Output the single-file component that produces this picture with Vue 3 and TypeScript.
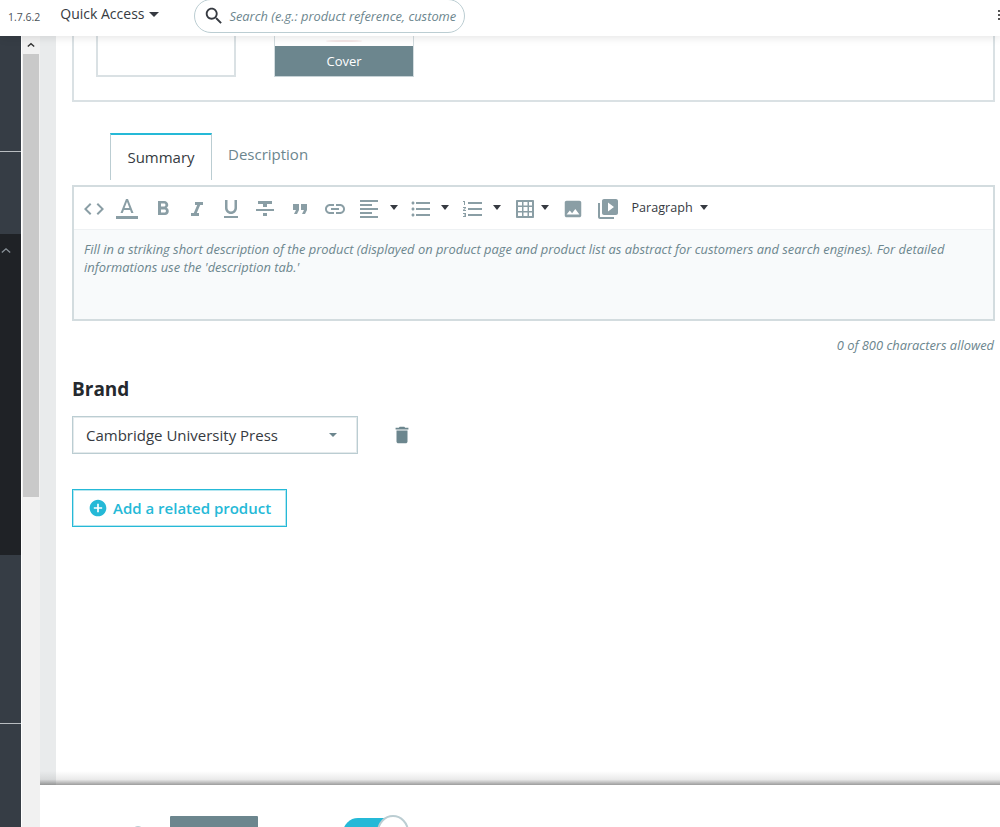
<script setup lang="ts">
interface ToolItem {
  kind: 'icon' | 'caret'
  gap: number
  d?: string
  size?: number
}

const tools: ToolItem[] = [
  { kind: 'icon', gap: 0, size: 24, d: 'M9.4 16.6 4.8 12l4.6-4.6L8 6l-6 6 6 6 1.4-1.4zm5.2 0 4.6-4.6-4.6-4.6L16 6l6 6-6 6-1.4-1.4z' },
  { kind: 'icon', gap: 9, size: 24, d: 'M11 2 5.500 16h2.250l1.120-3h6.250l1.120 3h2.250L13 2h-2zm-1.380 9L12 4.670 14.380 11H9.620zM1 19h22v3H1z' },
  { kind: 'icon', gap: 12, size: 24, d: 'M15.600 10.790c.97-.67 1.650-1.770 1.650-2.790 0-2.260-1.750-4-4-4H7v14h7.040c2.090 0 3.710-1.700 3.710-3.790 0-1.520-.86-2.820-2.150-3.420zM10 6.500h3c.83 0 1.500.67 1.500 1.500s-.67 1.500-1.500 1.500h-3v-3zm3.500 9H10v-3h3.500c.83 0 1.500.67 1.500 1.500s-.67 1.500-1.500 1.500z' },
  { kind: 'icon', gap: 10, size: 24, d: 'M10 5v3h2.210l-3.420 8H6v3h8v-3h-2.210l3.420-8H18V5z' },
  { kind: 'icon', gap: 10, size: 24, d: 'M12 17c3.310 0 6-2.690 6-6V3h-2.500v8c0 1.930-1.570 3.500-3.500 3.500S8.500 12.930 8.500 11V3H6v8c0 3.310 2.690 6 6 6zm-7 2v2h14v-2H5z' },
  { kind: 'icon', gap: 10, size: 24, d: 'M10 19h4v-3h-4v3zM5 4v3h5v3h4V7h5V4H5zM3 14h18v-2H3v2z' },
  { kind: 'icon', gap: 11, size: 24, d: 'M6 17h3l2-4V7H5v6h3zm8 0h3l2-4V7h-6v6h3z' },
  { kind: 'icon', gap: 11, size: 24, d: 'M3.900 12c0-1.710 1.390-3.100 3.100-3.100h4V7H7c-2.760 0-5 2.240-5 5s2.240 5 5 5h4v-1.900H7c-1.710 0-3.100-1.390-3.100-3.100zM8 13h8v-2H8v2zm9-6h-4v1.900h4c1.710 0 3.100 1.390 3.100 3.100s-1.390 3.100-3.100 3.100h-4V17h4c2.760 0 5-2.240 5-5s-2.240-5-5-5z' },
  { kind: 'icon', gap: 10, size: 24, d: 'M15 15H3v2h12v-2zm0-8H3v2h12V7zM3 13h18v-2H3v2zm0 8h18v-2H3v2zM3 3v2h18V3H3z' },
  { kind: 'caret', gap: 9 },
  { kind: 'icon', gap: 11, size: 24, d: 'M4 10.500c-.83 0-1.500.67-1.500 1.500s.67 1.500 1.500 1.500 1.500-.67 1.500-1.500-.67-1.500-1.500-1.500zm0-6c-.83 0-1.500.67-1.500 1.500S3.170 7.500 4 7.500 5.500 6.830 5.500 6 4.830 4.500 4 4.500zm0 12c-.83 0-1.500.68-1.500 1.500s.68 1.500 1.500 1.500 1.500-.68 1.500-1.500-.67-1.500-1.500-1.500zM7 19h14v-2H7v2zm0-6h14v-2H7v2zm0-8v2h14V5H7z' },
  { kind: 'caret', gap: 8 },
  { kind: 'icon', gap: 12, size: 24, d: 'M2 17h2v.5H3v1h1v.5H2v1h3v-4H2v1zm1-9h1V4H2v1h1v3zm-1 3h1.800L2 13.100v.9h3v-1H3.200L5 10.900V10H2v1zm5-6v2h14V5H7zm0 14h14v-2H7v2zm0-6h14v-2H7v2z' },
  { kind: 'caret', gap: 8 },
  { kind: 'icon', gap: 11.5, size: 24, d: 'M20 3H4c-.55 0-1 .45-1 1v16c0 .55.45 1 1 1h16c.55 0 1-.45 1-1V4c0-.55-.45-1-1-1zM9 19H5v-3.500h4V19zm0-5H5v-4h4v4zm0-5.500H5V5h4v3.500zm5.500 10.500h-4v-3.500h4V19zm0-5h-4v-4h4v4zm0-5.500h-4V5h4v3.500zM19 19h-3v-3.500h3V19zm0-5h-3v-4h3v4zm0-5.500h-3V5h3v3.500z' },
  { kind: 'caret', gap: 4 },
  { kind: 'icon', gap: 13, size: 22, d: 'M21 19V5c0-1.100-.9-2-2-2H5c-1.100 0-2 .9-2 2v14c0 1.100.9 2 2 2h14c1.100 0 2-.9 2-2zM8.500 13.500l2.500 3.010L14.500 12l4.500 6H5l3.500-4.500z' },
  { kind: 'icon', gap: 12, size: 24, d: 'M4 6H2v14c0 1.100.9 2 2 2h14v-2H4V6zm16-4H8c-1.100 0-2 .9-2 2v12c0 1.100.9 2 2 2h12c1.100 0 2-.9 2-2V4c0-1.100-.9-2-2-2zm-8 12.500v-9l6 4.500-6 4.500z' }
]
</script>

<template>
  <div class="page">
    <header class="topbar">
      <span class="version">1.7.6.2</span>
      <span class="quick">Quick Access<i class="caret caret-dark"></i></span>
      <div class="search">
        <svg class="search-icon" viewBox="0 0 24 24" width="22" height="22"><path d="M15.500 14h-.79l-.28-.27C15.410 12.590 16 11.110 16 9.500 16 5.910 13.090 3 9.500 3S3 5.910 3 9.500 5.910 16 9.500 16c1.610 0 3.090-.59 4.230-1.570l.27.28v.79l5 4.990L20.490 19l-4.990-5zm-6 0C7.010 14 5 11.990 5 9.500S7.010 5 9.500 5 14 7.010 14 9.500 11.990 14 9.500 14z" /></svg>
        <span class="search-text">Search (e.g.: product reference, custome</span>
      </div>
      <span class="kebab"></span>
    </header>

    <div class="frame">
      <aside class="sidebar">
        <div class="side side-a"></div>
        <div class="side side-b"></div>
        <div class="side side-active">
          <svg viewBox="0 0 12 8" width="10" height="7"><path d="M1 6.500 6 2l5 4.500" fill="none" stroke="#8a9299" stroke-width="1.600" /></svg>
        </div>
        <div class="side side-c"></div>
        <div class="side side-d"></div>
      </aside>

      <div class="scrollbar">
        <div class="scroll-btn">
          <svg viewBox="0 0 10 7" width="8" height="6"><path d="M1 5.500 5 1.800l4 3.700" fill="none" stroke="#333" stroke-width="1.700" /></svg>
        </div>
        <div class="scroll-thumb"></div>
      </div>

      <div class="workspace">
        <div class="viewport">
          <main class="content">
            <section class="images-card">
              <div class="tile"></div>
              <div class="tile tile-cover">
                <div class="tile-image"><span class="tile-smear"></span></div>
                <div class="cover-label">Cover</div>
              </div>
            </section>

            <nav class="tabs">
              <div class="tab tab-active">Summary</div>
              <div class="tab">Description</div>
            </nav>

            <section class="editor">
              <div class="toolbar">
                <template v-for="(t, i) in tools" :key="i">
                  <span v-if="t.kind === 'caret'" class="caret caret-tool" :style="{ marginLeft: t.gap + 'px' }"></span>
                  <svg v-else class="tool" viewBox="0 0 24 24" :width="t.size" :height="t.size" :style="{ marginLeft: t.gap + 'px' }"><path :d="t.d" /></svg>
                </template>
                <span class="paragraph">Paragraph</span>
                <span class="caret caret-para"></span>
              </div>
              <div class="editor-body">Fill in a striking short description of the product (displayed on product page and product list as abstract for customers and search engines). For detailed informations use the 'description tab.'</div>
            </section>

            <p class="counter">0 of 800 characters allowed</p>

            <h2 class="brand-title">Brand</h2>
            <div class="brand-row">
              <div class="select">
                <span>Cambridge University Press</span>
                <i class="select-caret"></i>
              </div>
              <svg class="trash" viewBox="0 0 24 24" width="22" height="22"><path d="M6 19c0 1.100.9 2 2 2h8c1.100 0 2-.9 2-2V7H6v12zM19 4h-3.500l-1-1h-5l-1 1H5v2h14V4z" /></svg>
            </div>

            <button class="add-btn" type="button">
              <svg viewBox="0 0 24 24" width="20" height="20"><path d="M12 2C6.480 2 2 6.480 2 12s4.480 10 10 10 10-4.480 10-10S17.520 2 12 2zm5 11h-4v4h-2v-4H7v-2h4V7h2v4h4v2z" /></svg>
              <span>Add a related product</span>
            </button>
          </main>
        </div>

        <footer class="footer">
          <span class="foot-arc"></span>
          <span class="foot-btn"></span>
          <span class="foot-switch"><i class="foot-knob"></i></span>
        </footer>
      </div>
    </div>
  </div>
</template>

<style>
html, body { margin: 0; background: #fff; }
</style>

<style scoped>
.page {
  width: 1000px;
  height: 827px;
  overflow: hidden;
  display: flex;
  flex-direction: column;
  font-family: "Open Sans", "Noto Sans", sans-serif;
  color: #363a41;
  background: #fff;
}
.topbar {
  position: relative;
  z-index: 3;
  flex: 0 0 36px;
  height: 36px;
  display: flex;
  align-items: flex-start;
  background: #fff;
  box-shadow: 0 0 10px rgba(0, 0, 0, 0.14);
}
.version { margin: 10px 0 0 8px; font-size: 10.500px; line-height: 14px; color: #4a5157; }
.quick { margin: 4px 0 0 20px; font-size: 14px; line-height: 20px; color: #363a41; display: flex; align-items: center; }
.caret { display: inline-block; width: 0; height: 0; border-left: 5px solid transparent; border-right: 5px solid transparent; border-top: 5px solid #363a41; }
.caret-dark { margin-left: 5px; }
.search {
  margin: -1px 0 0 35px;
  width: 269px;
  height: 32px;
  border: 1px solid #bbcdd2;
  border-radius: 17px;
  display: flex;
  align-items: center;
  flex: none;
}
.search-icon { margin-left: 8px; flex: none; fill: #363a41; }
.search-text {
  margin-left: 4px;
  white-space: nowrap;
  font-style: italic;
  font-size: 12.850px;
  color: #6c868e;
}
.kebab { margin: 10px 0 0 auto; width: 2px; height: 10px; background: repeating-linear-gradient(#555 0 2px, transparent 2px 4px); }
.frame { flex: 1; display: flex; min-height: 0; }
.sidebar {
  flex: 0 0 21px;
  display: flex;
  flex-direction: column;
  background: #363d45;
}
.side { box-sizing: border-box; flex: none; }
.side-a { height: 116px; border-bottom: 1px solid #b9bdc1; }
.side-b { height: 82px; }
.side-active { height: 321px; background: #1f2226; display: flex; justify-content: center; padding-top: 13px; }
.side-active svg { margin-left: -9px; }
.side-c { height: 169px; border-bottom: 1px solid #b9bdc1; }
.side-d { flex: 1; }
.scrollbar {
  flex: 0 0 19px;
  box-sizing: border-box;
  border-left: 1px solid #fff;
  background: #f1f1f1;
  display: flex;
  flex-direction: column;
  padding-right: 1px;
}
.scroll-btn { height: 18px; display: flex; align-items: center; justify-content: center; }
.scroll-thumb { height: 443px; background: #c9c9c9; margin-left: 1px; }
.workspace { flex: 1; min-width: 0; display: flex; flex-direction: column; }
.viewport {
  height: 749px;
  flex: none;
  background: #e9ebec;
  padding-left: 16px;
  box-sizing: border-box;
  overflow: hidden;
  position: relative;
}
.viewport::after {
  content: "";
  position: absolute;
  left: 0;
  right: 0;
  bottom: 0;
  height: 14px;
  background: linear-gradient(rgba(110, 110, 110, 0), rgba(110, 110, 110, 0.14) 60%, rgba(90, 90, 90, 0.6));
}
.content { background: #fff; height: 100%; padding: 0 5px 0 16px; box-sizing: border-box; }
.images-card {
  height: 66px;
  box-sizing: border-box;
  border: 2px solid #dae1e4;
  border-top: 0;
  padding-left: 22px;
  display: flex;
  gap: 38px;
}
.tile {
  width: 140px;
  height: 41px;
  box-sizing: border-box;
  border: 2px solid #dae1e4;
  border-top: 0;
}
.tile-cover {
  display: flex;
  flex-direction: column;
  border: 0;
  border-left: 1px solid #d3dcdf;
  border-right: 1px solid #d3dcdf;
  border-bottom: 1px solid #c6d2d6;
}
.tile-image { height: 10px; flex: none; display: flex; justify-content: center; align-items: flex-start; padding-top: 4px; box-sizing: border-box; }
.tile-smear { width: 36px; height: 2px; border-radius: 50%; background: #f4e6e6; }
.cover-label {
  height: 30px;
  background: #6c868e;
  color: #fff;
  font-size: 13px;
  text-align: center;
  line-height: 31px;
}
.tabs { display: flex; margin: 31px 0 0 38px; height: 47px; }
.tab {
  font-size: 15px;
  color: #6c868e;
  padding: 9px 16px 0;
  line-height: 24px;
}
.tab-active {
  box-sizing: border-box;
  width: 102px;
  color: #363a41;
  border-top: 2px solid #25b9d7;
  border-left: 1px solid #bbcdd2;
  border-right: 1px solid #bbcdd2;
  background: #fff;
  text-align: center;
  padding: 10px 0 0;
}
.editor {
  margin-top: 5px;
  height: 136px;
  box-sizing: border-box;
  border: 2px solid #d3dcdf;
  display: flex;
  flex-direction: column;
}
.toolbar {
  height: 43px;
  flex: none;
  box-sizing: border-box;
  display: flex;
  align-items: center;
  padding: 1px 0 0 8px;
  border-bottom: 1px solid #eef1f3;
}
.tool { flex: none; fill: #8a9ea5; }
.caret-tool { flex: none; border-left-width: 4.500px; border-right-width: 4.500px; border-top-width: 5px; margin-top: -3px; }
.paragraph { margin-left: 12px; font-size: 12.600px; color: #363a41; margin-top: -3px; }
.caret-para { margin-left: 7px; margin-top: -3px; border-left-width: 4.500px; border-right-width: 4.500px; }
.editor-body {
  flex: 1;
  background: #f8fafb;
  padding: 10px 10px 0;
  font-size: 12.900px;
  line-height: 18px;
  font-style: italic;
  color: #6c868e;
}
.counter {
  margin: 15px 1px 0 0;
  text-align: right;
  font-size: 12.900px;
  line-height: 18px;
  font-style: italic;
  color: #6c868e;
}
.brand-title { margin: 22px 0 0; font-size: 19px; line-height: 26px; font-weight: 700; color: #25292e; }
.brand-row { display: flex; align-items: center; margin-top: 14px; }
.select {
  width: 286px;
  height: 38px;
  box-sizing: border-box;
  border: 1px solid #bbcdd2;
  box-shadow: inset 0 0 0 1px #e4eaec;
  display: flex;
  align-items: center;
  justify-content: space-between;
  padding: 0 20px 0 13px;
  font-size: 15px;
  color: #363a41;
}
.select-caret { width: 0; height: 0; border-left: 4px solid transparent; border-right: 4px solid transparent; border-top: 4px solid #6c868e; }
.trash { margin-left: 33px; fill: #6c868e; }
.add-btn {
  display: flex;
  align-items: center;
  margin-top: 35px;
  width: 215px;
  height: 38px;
  box-sizing: border-box;
  border: 1px solid #25b9d7;
  box-shadow: inset 0 0 0 1px #b5e6f0;
  background: #fff;
  padding: 0 0 0 15px;
  font-family: inherit;
  font-size: 15px;
  font-weight: 600;
  color: #25b9d7;
}
.add-btn svg { fill: #25b9d7; flex: none; margin-right: 5px; }
.footer {
  flex: 1;
  background: #fff;
  display: flex;
  align-items: flex-start;
  padding-top: 31px;
  overflow: hidden;
}
.foot-arc { margin: 10px 0 0 92px; width: 10px; height: 10px; border-radius: 50%; border: 1px solid #bbcdd2; flex: none; }
.foot-btn { margin-left: 26px; width: 88px; height: 30px; background: #6c868e; flex: none; border-radius: 1px; }
.foot-switch {
  margin-left: 85px;
  width: 66px;
  height: 30px;
  flex: none;
  border-radius: 15px;
  background: #25b9d7;
  position: relative;
  margin-top: 2px;
}
.foot-knob {
  position: absolute;
  right: 0;
  top: -3px;
  width: 32px;
  height: 34px;
  box-sizing: border-box;
  background: #fff;
  border: 2px solid #bbcdd2;
  border-radius: 50%;
}
</style>
